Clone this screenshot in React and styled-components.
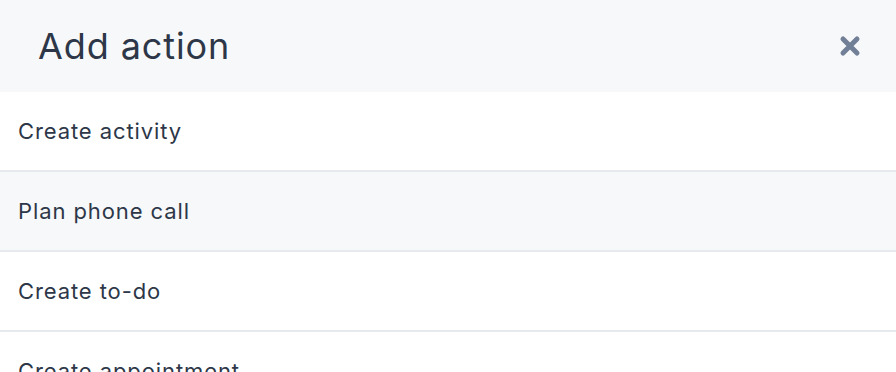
import React from "react";
import styled, { createGlobalStyle } from "styled-components";

const Global = createGlobalStyle`
  html, body { margin: 0; padding: 0; background: #ffffff; }
  body { font-family: Inter, "Noto Sans", sans-serif; color: #2d3748; }
`;

const Panel = styled.div`
  width: 896px;
  height: 372px;
  overflow: hidden;
  display: flex;
  flex-direction: column;
`;

const Header = styled.div`
  height: 92px;
  flex: none;
  box-sizing: border-box;
  background: #f7f8fa;
  display: flex;
  align-items: center;
  justify-content: space-between;
  padding: 0 34px 0 38px;
`;

const Title = styled.h2`
  margin: 0;
  font-size: 36px;
  font-weight: 400;
  color: #2d3748;
  letter-spacing: 0.9px;
`;

const CloseButton = styled.button`
  border: 0;
  background: none;
  padding: 0;
  width: 24px;
  height: 24px;
  display: flex;
  align-items: center;
  justify-content: center;
  color: #718096;
  cursor: pointer;
`;

const List = styled.ul`
  list-style: none;
  margin: 0;
  padding: 0;
`;

const Row = styled.li`
  height: 80px;
  box-sizing: border-box;
  display: flex;
  align-items: center;
  padding: 0 18px;
  font-size: 22px;
  letter-spacing: 0.9px;
  color: #2d3748;
  background: ${(p) => (p.$active ? "#f7f8fa" : "#ffffff")};
  border-bottom: 2px solid #e6e9ee;
`;

const items = ["Create activity", "Plan phone call", "Create to-do", "Create appointment"];

export default function App() {
  return (
    <>
      <Global />
      <Panel>
        <Header>
          <Title>Add action</Title>
          <CloseButton aria-label="Close">
            <svg width="22" height="22" viewBox="0 0 22 22">
              <path d="M4 4 L18 18 M18 4 L4 18" stroke="currentColor" strokeWidth="5" strokeLinecap="round" />
            </svg>
          </CloseButton>
        </Header>
        <List>
          {items.map((t, i) => (
            <Row key={t} $active={i === 1}>{t}</Row>
          ))}
        </List>
      </Panel>
    </>
  );
}
